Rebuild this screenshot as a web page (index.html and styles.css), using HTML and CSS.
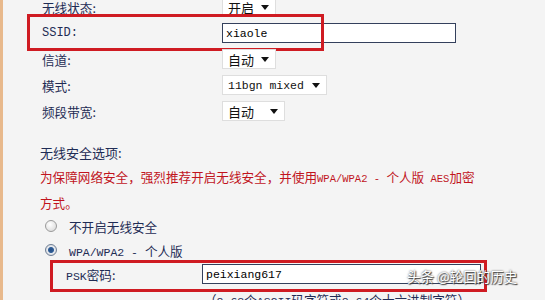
FILE: index.html
```html
<!DOCTYPE html>
<html lang="zh-CN">
<head>
    <meta charset="UTF-8">
    <meta name="viewport" content="width=device-width, initial-scale=1.0">
    <title>无线设置</title>

    <link rel="stylesheet" href="styles.css">
</head>
<body>
    <div class="page">
        <div class="basic">
            <div class="row">
                <span class="label">无线状态:</span>
                <span class="select w-54"><span>开启</span><i class="arrow"></i></span>
            </div>
            <div class="row">
                <span class="label lat">SSID:</span>
                <span class="field w-234">xiaole</span>
                <span class="mark mark-ssid"></span>
            </div>
            <div class="row">
                <span class="label">信道:</span>
                <span class="select w-54"><span>自动</span><i class="arrow"></i></span>
            </div>
            <div class="row">
                <span class="label">模式:</span>
                <span class="select w-105"><span class="lat">11bgn mixed</span><i class="arrow"></i></span>
            </div>
            <div class="row">
                <span class="label">频段带宽:</span>
                <span class="select w-63"><span>自动</span><i class="arrow"></i></span>
            </div>
        </div>

        <div class="security">
            <p class="title">无线安全选项:</p>
            <p class="warn">为保障网络安全，强烈推荐开启无线安全，并使用<span class="lat">WPA/WPA2 - </span>个人版<span class="lat"> AES</span>加密<br>方式。</p>

            <div class="radio-row">
                <span class="radio"></span>
                <span>不开启无线安全</span>
            </div>
            <div class="radio-row">
                <span class="radio checked"></span>
                <span><span class="lat">WPA/WPA2 - </span>个人版</span>
            </div>
            <div class="psk-row">
                <span class="psk-label"><span class="lat">PSK</span>密码:</span>
                <span class="field w-279">peixiang617</span>
                <span class="mark mark-psk"></span>
            </div>
            <p class="note">（<span class="lat">8-63</span>个<span class="lat">ASCII</span>码字符或<span class="lat">8-64</span>个十六进制字符）</p>
        </div>

        <div class="watermark">头条 @轮回的历史</div>
    </div>
</body>
</html>
```

FILE: styles.css
```css
html, body{
    margin: 0;
    padding: 0;
}

body{
    width: 545px;
    height: 300px;
    overflow: hidden;
    background-color: #f4f4f4;
    font-family: "Noto Sans CJK SC", "Liberation Mono", sans-serif;
    font-size: 12.6px;
    color: #1f2c55;
}

.page{
    position: relative;
    height: 300px;
    border-left: 3px solid #e8b98c;
    overflow: hidden;
}

.lat{
    font-family: "Liberation Mono", monospace;
    font-size: 11.5px;
}

/* top block: label column + control column */
.basic{
    margin-top: -6px;
    padding-left: 39px;
}

.row{
    position: relative;
    display: grid;
    grid-template-columns: 180px auto;
    align-items: center;
    height: 26px;
}

.label{
    white-space: nowrap;
}

.label.lat{
    font-size: 12px;
}

.select{
    display: inline-flex;
    align-items: center;
    justify-content: space-between;
    box-sizing: border-box;
    height: 20px;
    padding: 0 6px 0 5px;
    background-color: #fff;
    border: 1px solid #dedede;
    font-size: 13px;
    color: #111;
}

.select .lat{
    font-size: 11.5px;
}

.w-54{ width: 54px; }
.w-63{ width: 63px; }
.w-105{ width: 105px; }
.w-234{ width: 234px; }
.w-279{ width: 279px; }

.arrow{
    width: 0;
    height: 0;
    border-left: 4px solid transparent;
    border-right: 4px solid transparent;
    border-top: 5px solid #111;
}

.field{
    display: inline-flex;
    align-items: center;
    box-sizing: border-box;
    height: 20px;
    padding: 0 3px;
    background-color: #fff;
    border: 1px solid #34405c;
    font-family: "Liberation Mono", monospace;
    font-size: 11.5px;
    color: #000;
}

/* red annotation frames drawn over the rows */
.mark{
    position: absolute;
    box-sizing: border-box;
    border: 3px solid #cf1b22;
    pointer-events: none;
}

.mark-ssid{
    left: -15px;
    top: -6px;
    width: 297px;
    height: 37px;
}

.security{
    padding-left: 37px;
}

.title{
    margin: 17px 0 0;
    line-height: 24px;
    font-size: 13px;
}

.warn{
    margin: 0;
    line-height: 24px;
    color: #c1141d;
}

.warn .lat{
    font-size: 10.5px;
}

.radio-row{
    display: flex;
    align-items: center;
    height: 26px;
    margin-top: -2px;
    padding-left: 5px;
}

.radio{
    box-sizing: border-box;
    width: 12px;
    height: 12px;
    margin-right: 12px;
    border: 1px solid #9a9a9a;
    border-radius: 50%;
    background: radial-gradient(circle at 40% 35%, #ffffff, #d4d4d4);
}

.radio.checked{
    border-color: #6f7f95;
    background: radial-gradient(circle, #234d86 0, #2f5d96 2.5px, #e6e9ee 3.5px, #c8ccd3 100%);
}

.psk-row{
    position: relative;
    display: grid;
    grid-template-columns: 136px auto;
    align-items: center;
    height: 22px;
    padding-left: 26px;
}

.mark-psk{
    left: 10px;
    top: -3px;
    width: 437px;
    height: 32px;
}

.note{
    margin: 4px 0 0 164px;
    line-height: 22px;
    white-space: nowrap;
}

.watermark{
    position: absolute;
    left: 404px;
    top: 266px;
    font-size: 13.5px;
    color: #fff;
    text-shadow: 0 0 2px #333, 1px 1px 1px #444;
    white-space: nowrap;
}
```
